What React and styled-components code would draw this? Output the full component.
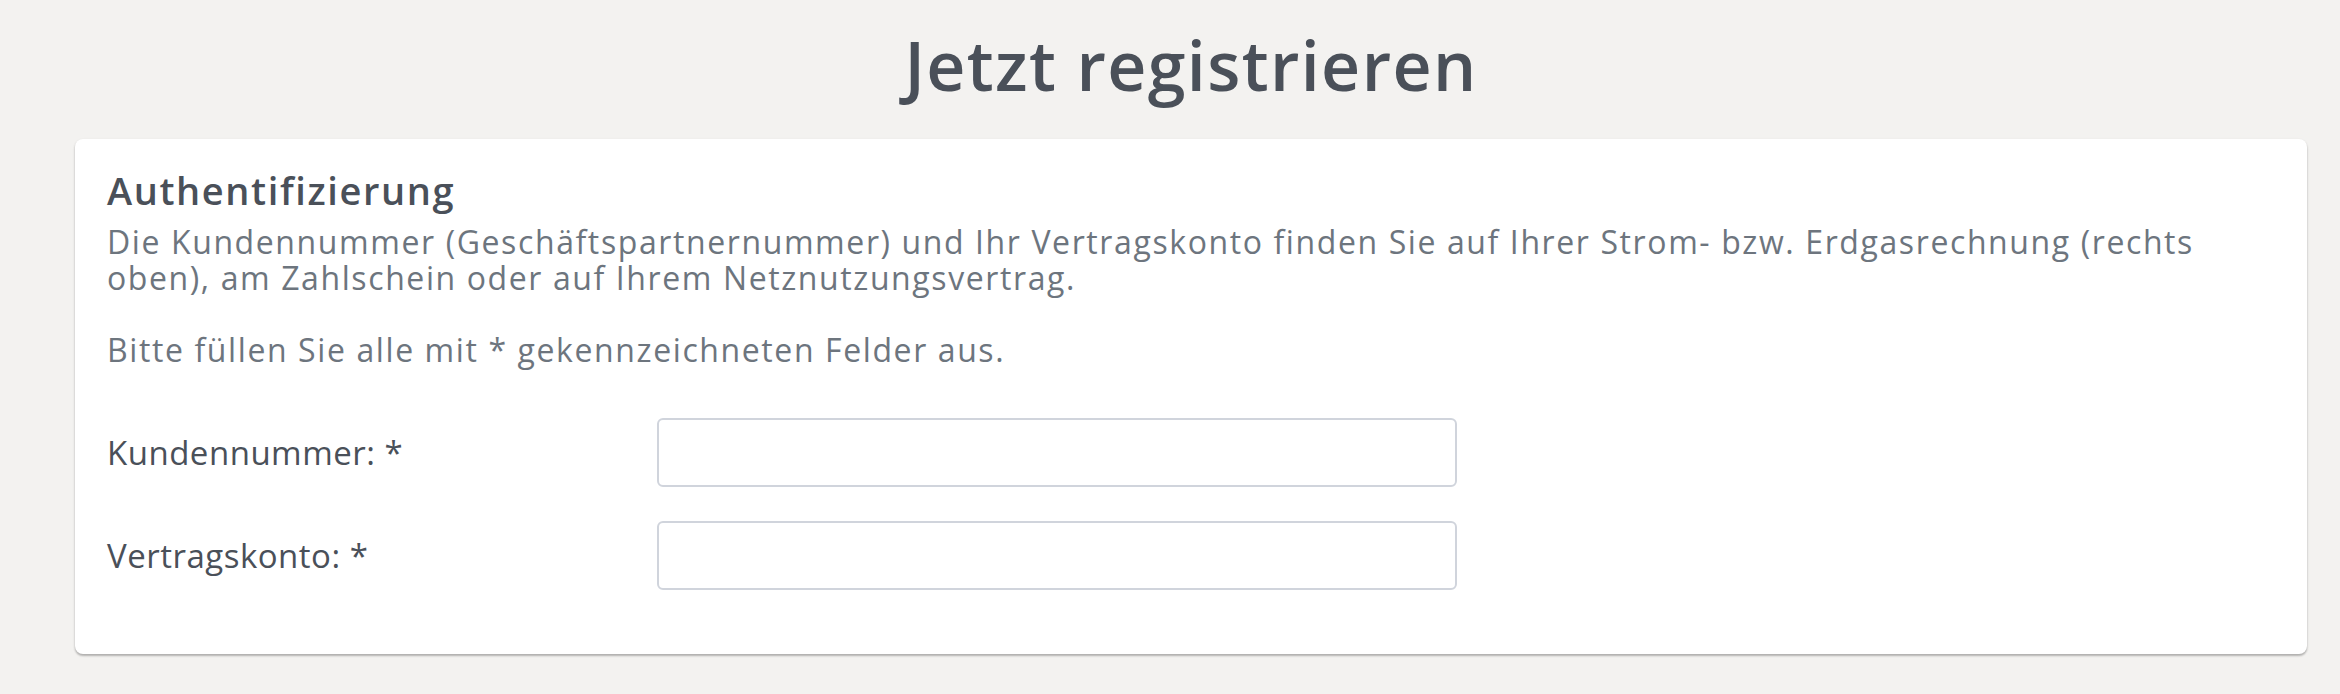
import React from "react";
import styled, { createGlobalStyle } from "styled-components";

const GlobalStyle = createGlobalStyle`
  html, body {
    margin: 0;
    padding: 0;
    background: #f3f2f0;
  }
  body {
    font-family: "Open Sans", "Noto Sans", Arial, sans-serif;
    color: #4a5059;
  }
  * {
    box-sizing: border-box;
  }
`;

const Page = styled.main`
  padding: 31px 33px 36px 75px;
`;

const PageTitle = styled.h1`
  margin: 0 0 40px;
  font-size: 68px;
  line-height: 68px;
  font-weight: 600;
  letter-spacing: 1.4px;
  text-align: center;
  color: #4a5059;
`;

const Card = styled.section`
  background: #ffffff;
  border-radius: 8px;
  padding: 29px 32px 64px;
  box-shadow: 0 1px 3px rgba(0, 0, 0, 0.1), 0 2px 2px rgba(0, 0, 0, 0.22);
`;

const CardTitle = styled.h2`
  margin: 0 0 12px;
  font-size: 38px;
  line-height: 44px;
  font-weight: 600;
  letter-spacing: 1.6px;
  color: #4a5059;
`;

const Text = styled.p`
  margin: 0 0 36px;
  font-size: 32px;
  line-height: 36px;
  letter-spacing: 1.6px;
  color: #6d757e;

  &:last-of-type {
    margin-bottom: 50px;
  }
`;

const Form = styled.form`
  display: flex;
  flex-direction: column;
  gap: 34px;
`;

const FieldRow = styled.div`
  display: grid;
  grid-template-columns: 550px 800px;
  align-items: center;
`;

const Label = styled.label`
  font-size: 33px;
  font-weight: 500;
  letter-spacing: 0.5px;
  color: #4a5059;
`;

const Input = styled.input`
  height: 69px;
  width: 100%;
  border: 2px solid #d0d4dc;
  border-radius: 6px;
  background: #ffffff;
  padding: 0 16px;
  font-family: inherit;
  font-size: 30px;
  color: #4a5059;
  outline: none;
`;

const fields = [
  { id: "kundennummer", label: "Kundennummer: *" },
  { id: "vertragskonto", label: "Vertragskonto: *" },
];

export default function App() {
  return (
    <>
      <GlobalStyle />
      <Page>
        <PageTitle>Jetzt registrieren</PageTitle>
        <Card>
          <CardTitle>Authentifizierung</CardTitle>
          <Text>
            Die Kundennummer (Geschäftspartnernummer) und Ihr Vertragskonto
            finden Sie auf Ihrer Strom- bzw. Erdgasrechnung (rechts oben), am
            Zahlschein oder auf Ihrem Netznutzungsvertrag.
          </Text>
          <Text>Bitte füllen Sie alle mit * gekennzeichneten Felder aus.</Text>
          <Form onSubmit={(e) => e.preventDefault()}>
            {fields.map((f) => (
              <FieldRow key={f.id}>
                <Label htmlFor={f.id}>{f.label}</Label>
                <Input id={f.id} type="text" />
              </FieldRow>
            ))}
          </Form>
        </Card>
      </Page>
    </>
  );
}
